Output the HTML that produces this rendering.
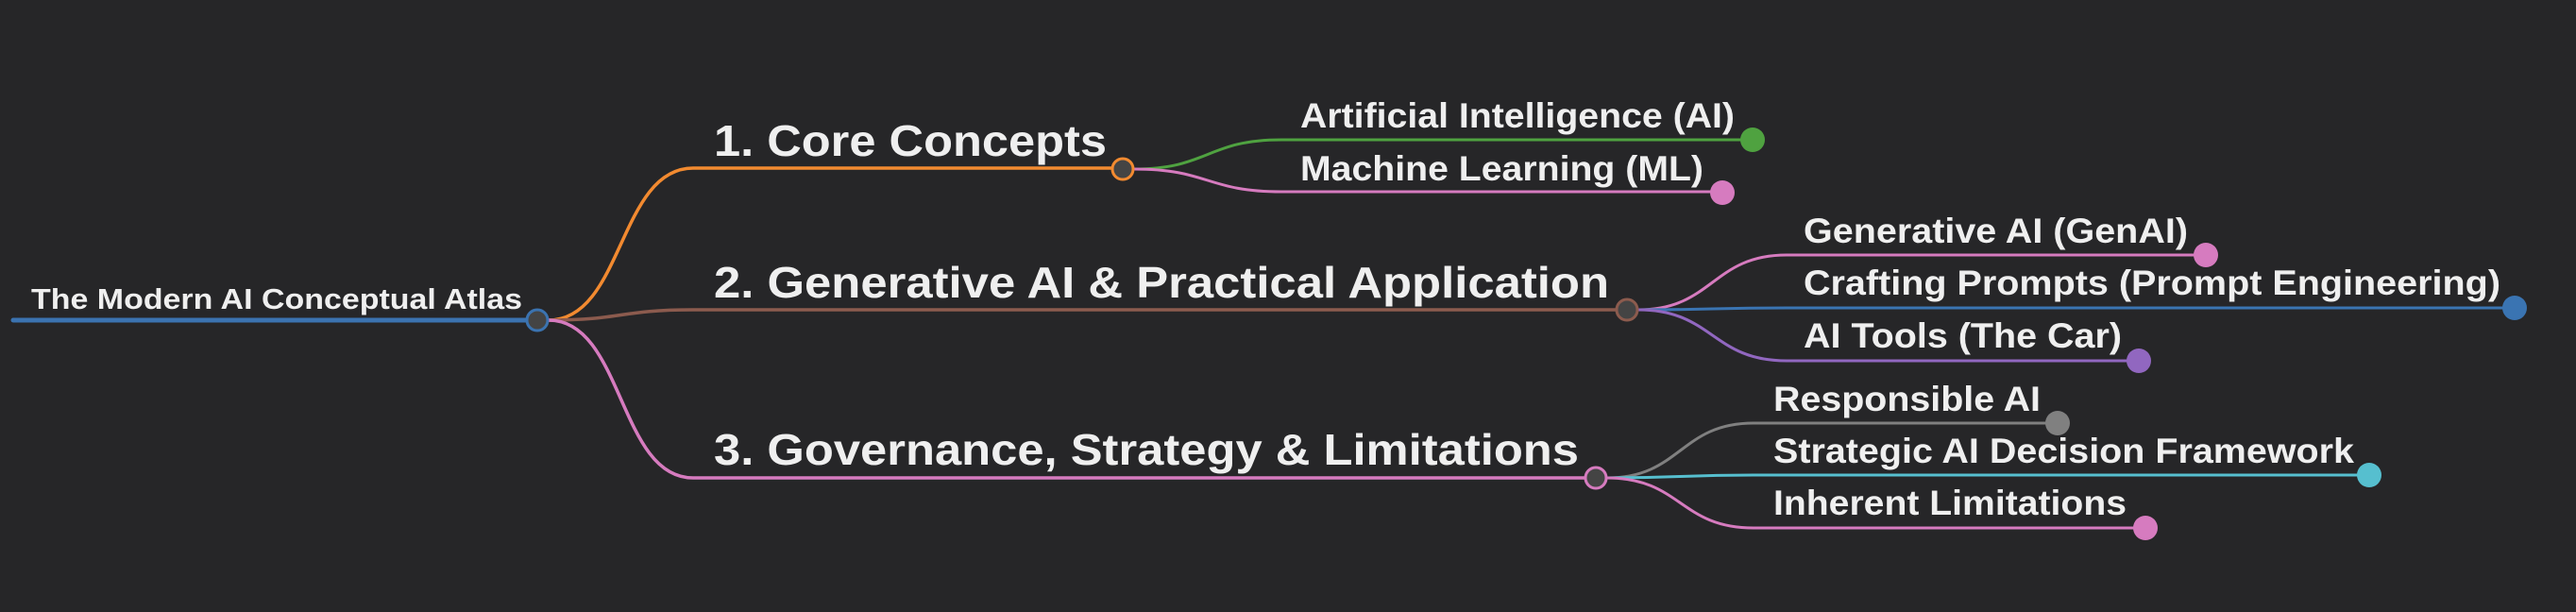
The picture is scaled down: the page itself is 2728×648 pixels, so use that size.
<!DOCTYPE html>
<html><head><meta charset="utf-8"><style>
html,body{margin:0;padding:0;background:#262628;width:2728px;height:648px;overflow:hidden}
svg{display:block}
text{font-family:"Liberation Sans",Arial,sans-serif;font-weight:bold;fill:#efefef}
</style></head><body>
<svg width="2728" height="648" viewBox="0 0 2728 648" xmlns="http://www.w3.org/2000/svg">
<g fill="none" stroke-linecap="round">
<!-- root -->
<path d="M14 339 H557" stroke="#3b73b0" stroke-width="5"/>
<!-- root to L1 -->
<path d="M581 339 C660 339,655 178,734 178 H1177" stroke="#f28a30" stroke-width="3.5"/>
<path d="M581 339 C660 339,655 328,734 328 H1711" stroke="#8c5b4e" stroke-width="3.5"/>
<path d="M581 339 C660 339,655 506,734 506 H1678" stroke="#d67bbf" stroke-width="3.5"/>
<!-- core children -->
<path d="M1201 179 C1280 179,1278 148,1357 148 H1846" stroke="#4fa240" stroke-width="3"/>
<path d="M1201 179 C1280 179,1278 203,1357 203 H1814" stroke="#d67bbf" stroke-width="3"/>
<!-- gen children -->
<path d="M1735 328 C1814 328,1813 270,1892 270 H2326" stroke="#d67bbf" stroke-width="3"/>
<path d="M1735 328 C1814 328,1813 326,1892 326 H2653" stroke="#3a74b2" stroke-width="3"/>
<path d="M1735 328 C1814 328,1813 382,1892 382 H2255" stroke="#9167c0" stroke-width="3"/>
<!-- gov children -->
<path d="M1702 506 C1780 506,1779 448,1857 448 H2169" stroke="#808080" stroke-width="3"/>
<path d="M1702 506 C1780 506,1779 503,1857 503 H2499" stroke="#56bfcf" stroke-width="3"/>
<path d="M1702 506 C1780 506,1779 559,1857 559 H2262" stroke="#d67bbf" stroke-width="3"/>
</g>
<!-- nodes -->
<circle cx="569" cy="339" r="11" fill="#444" stroke="#3b73b0" stroke-width="3"/>
<circle cx="1189" cy="179" r="11" fill="#444" stroke="#f28a30" stroke-width="3"/>
<circle cx="1723" cy="328" r="11" fill="#444" stroke="#8c5b4e" stroke-width="3"/>
<circle cx="1690" cy="506" r="11" fill="#444" stroke="#d67bbf" stroke-width="3"/>
<circle cx="1856" cy="148" r="13" fill="#4fa240"/>
<circle cx="1824" cy="204" r="13" fill="#d67bbf"/>
<circle cx="2336" cy="270" r="13" fill="#d67bbf"/>
<circle cx="2663" cy="326" r="13" fill="#3a74b2"/>
<circle cx="2265" cy="382" r="13" fill="#9167c0"/>
<circle cx="2179" cy="448" r="13" fill="#808080"/>
<circle cx="2509" cy="503" r="13" fill="#56bfcf"/>
<circle cx="2272" cy="559" r="13" fill="#d67bbf"/>
<!-- text -->
<text x="33" y="327" font-size="31" textLength="520" lengthAdjust="spacingAndGlyphs">The Modern AI Conceptual Atlas</text>
<text x="756" y="165" font-size="46" textLength="416" lengthAdjust="spacingAndGlyphs">1. Core Concepts</text>
<text x="756" y="315" font-size="46" textLength="948" lengthAdjust="spacingAndGlyphs">2. Generative AI &amp; Practical Application</text>
<text x="756" y="492" font-size="46" textLength="916" lengthAdjust="spacingAndGlyphs">3. Governance, Strategy &amp; Limitations</text>
<text x="1377" y="135" font-size="37" textLength="460" lengthAdjust="spacingAndGlyphs">Artificial Intelligence (AI)</text>
<text x="1377" y="191" font-size="37" textLength="427" lengthAdjust="spacingAndGlyphs">Machine Learning (ML)</text>
<text x="1910" y="257" font-size="37" textLength="407" lengthAdjust="spacingAndGlyphs">Generative AI (GenAI)</text>
<text x="1910" y="312" font-size="37" textLength="738" lengthAdjust="spacingAndGlyphs">Crafting Prompts (Prompt Engineering)</text>
<text x="1910" y="368" font-size="37" textLength="337" lengthAdjust="spacingAndGlyphs">AI Tools (The Car)</text>
<text x="1878" y="435" font-size="37" textLength="283" lengthAdjust="spacingAndGlyphs">Responsible AI</text>
<text x="1878" y="490" font-size="37" textLength="615" lengthAdjust="spacingAndGlyphs">Strategic AI Decision Framework</text>
<text x="1878" y="545" font-size="37" textLength="374" lengthAdjust="spacingAndGlyphs">Inherent Limitations</text>
</svg>
</body></html>
